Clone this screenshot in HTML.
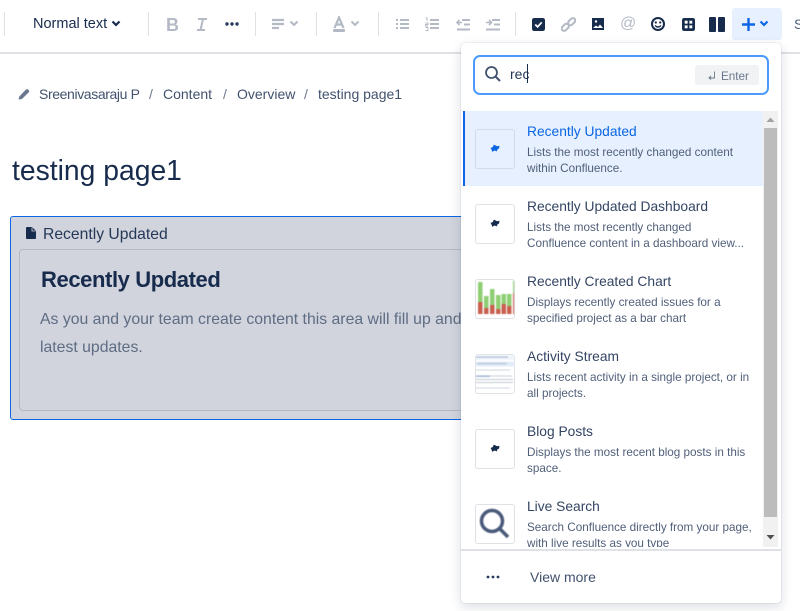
<!DOCTYPE html>
<html><head><meta charset="utf-8">
<style>
html,body{margin:0;padding:0;background:#fff}
#r{position:relative;width:800px;height:611px;overflow:hidden;background:#fff;font-family:"Liberation Sans",sans-serif;color:#172b4d}
#r div,#r span.a,#r svg{position:absolute}
.t{white-space:nowrap}
.sep{width:1px;height:24px;top:12px;background:#dfe1e6}
.ib{width:40px;height:40px;border:1px solid #dfe1e6;border-radius:3px;left:475px;background:#fff;box-sizing:content-box;overflow:hidden}
.ti{left:527px;margin-top:1px;font-size:13.800px;line-height:18px;color:#344563;white-space:nowrap}
.de{left:527px;margin-top:1px;font-size:11.700px;line-height:16px;color:#505f79;white-space:nowrap}
.bl{filter:blur(.4px)}
</style></head><body><div id="r">

<!-- toolbar -->
<div style="left:0;top:52px;width:800px;height:2px;background:#dfe1e6"></div>
<div class="sep" style="left:4px"></div>
<div class="t" style="left:33px;top:15px;font-size:14.500px;line-height:18px;color:#172b4d">Normal text</div>
<svg style="left:111px;top:20px" width="10" height="8" viewBox="0 0 10 8"><path d="M1.500 1.500l3.500 3.500 3.500-3.500" fill="none" stroke="#172b4d" stroke-width="2.200"/></svg>
<div class="sep" style="left:148px"></div>
<div class="t" style="left:166px;top:14px;font-size:18px;line-height:22px;font-weight:bold;color:#b3bac5">B</div>
<svg style="left:196px;top:17px" width="12" height="14" viewBox="0 0 12 14"><path d="M2 2h9M1 13h8M7 2L4.500 13" fill="none" stroke="#b3bac5" stroke-width="2"/></svg>
<svg style="left:225px;top:22px" width="14" height="4" viewBox="0 0 14 4"><circle cx="2" cy="2" r="1.700" fill="#253858"/><circle cx="7" cy="2" r="1.700" fill="#253858"/><circle cx="12" cy="2" r="1.700" fill="#253858"/></svg>
<div class="sep" style="left:255px"></div>
<svg style="left:271px;top:18px" width="14" height="12" viewBox="0 0 14 12"><path d="M1 2h12M1 6h12M1 10h7" stroke="#b3bac5" stroke-width="2.200"/></svg>
<svg style="left:289px;top:20px" width="10" height="8" viewBox="0 0 10 8"><path d="M1.500 1.500l3.500 3.500 3.500-3.500" fill="none" stroke="#b3bac5" stroke-width="2"/></svg>
<div class="sep" style="left:316px"></div>
<svg style="left:332px;top:16px" width="14" height="16" viewBox="0 0 14 16"><path d="M2.500 12L7 1.500 11.500 12M4 8.500h6" fill="none" stroke="#b3bac5" stroke-width="2.200"/><rect x="1" y="13" width="12" height="3" rx="1" fill="#b3bac5"/></svg>
<svg style="left:350px;top:20px" width="10" height="8" viewBox="0 0 10 8"><path d="M1.500 1.500l3.500 3.500 3.500-3.500" fill="none" stroke="#b3bac5" stroke-width="2"/></svg>
<div class="sep" style="left:378px"></div>
<svg style="left:395px;top:18px" width="14" height="12" viewBox="0 0 14 12"><path d="M1 2h2M1 6h2M1 10h2M5 2h9M5 6h9M5 10h9" stroke="#b3bac5" stroke-width="2"/></svg>
<svg style="left:425px;top:17px" width="14" height="14" viewBox="0 0 14 14"><path d="M5 3h9M5 7h9M5 11h9" stroke="#b3bac5" stroke-width="2"/><path d="M0.500 1h1.500v3M0.500 6h2.500v1.500h-2.500v1.500h2.500M0.500 10.500h2.500v3h-2.500" fill="none" stroke="#b3bac5" stroke-width="0.900"/></svg>
<svg style="left:456px;top:17px" width="14" height="14" viewBox="0 0 14 14"><path d="M6 3h8M8 7.500h6M1 12.500h13" stroke="#b3bac5" stroke-width="2"/><path d="M6 5.500H1M3.500 3l-2.500 2.500 2.500 2.500" fill="none" stroke="#b3bac5" stroke-width="1.600"/></svg>
<svg style="left:486px;top:17px" width="14" height="14" viewBox="0 0 14 14"><path d="M6 3h8M8 7.500h6M0 12.500h14" stroke="#b3bac5" stroke-width="2"/><path d="M0 5.500h5M3 3l2.500 2.500L3 8" fill="none" stroke="#b3bac5" stroke-width="1.600"/></svg>
<div class="sep" style="left:515px"></div>
<svg style="left:532px;top:18px" width="13" height="13" viewBox="0 0 12 12"><rect width="12" height="12" rx="2" fill="#172b4d"/><path d="M3 6l2.200 2.200L9 4" fill="none" stroke="#fff" stroke-width="1.600"/></svg>
<svg style="left:561px;top:17px" width="15" height="15" viewBox="0 0 14 14"><g fill="none" stroke="#b3bac5" stroke-width="1.900"><rect x="0.500" y="7.500" width="7.500" height="4.500" rx="2.200" transform="rotate(-45 4 10)"/><rect x="6" y="2" width="7.500" height="4.500" rx="2.200" transform="rotate(-45 10 4)"/></g></svg>
<svg style="left:592px;top:18px" width="12" height="12" viewBox="0 0 12 12"><rect width="12" height="12" fill="#172b4d"/><path d="M1 10l3-2.500 2 1.500 2-2.500 3 3.500z" fill="#fff"/><circle cx="4" cy="3.500" r="1.200" fill="#fff"/></svg>
<div class="t" style="left:620px;top:14px;font-size:16px;line-height:20px;color:#b3bac5">@</div>
<svg style="left:651px;top:17px" width="14" height="14" viewBox="0 0 14 14"><circle cx="7" cy="7" r="6" fill="none" stroke="#172b4d" stroke-width="2"/><circle cx="4.800" cy="5.500" r="1.100" fill="#172b4d"/><circle cx="9.200" cy="5.500" r="1.100" fill="#172b4d"/><path d="M4 8.500q3 3 6 0" fill="none" stroke="#172b4d" stroke-width="1.300"/></svg>
<svg style="left:682px;top:18px" width="13" height="13" viewBox="0 0 12 12"><rect width="12" height="12" rx="2" fill="#172b4d"/><rect x="2.500" y="2.500" width="2.700" height="2.700" fill="#fff"/><rect x="6.800" y="2.500" width="2.700" height="2.700" fill="#fff"/><rect x="2.500" y="6.800" width="2.700" height="2.700" fill="#fff"/><rect x="6.800" y="6.800" width="2.700" height="2.700" fill="#fff"/></svg>
<svg style="left:709px;top:17px" width="16" height="15" viewBox="0 0 16 15"><rect width="7" height="15" rx="1" fill="#172b4d"/><rect x="9" width="7" height="15" rx="1" fill="#172b4d"/></svg>
<div style="left:732px;top:8px;width:50px;height:32px;background:#e6f0fe;border-radius:3px"></div>
<svg style="left:741px;top:17px" width="15" height="15" viewBox="0 0 15 15"><path d="M7.500 1v13M1 7.500h13" stroke="#0c66e4" stroke-width="2.400"/></svg>
<svg style="left:759px;top:20px" width="10" height="8" viewBox="0 0 10 8"><path d="M1.500 1.500l3.500 3.500 3.500-3.500" fill="none" stroke="#0c66e4" stroke-width="2.200"/></svg>
<div class="t" style="left:794px;top:15px;font-size:14px;line-height:18px;color:#505f79">S</div>

<!-- breadcrumb -->
<svg style="left:18px;top:88px" width="12" height="12" viewBox="0 0 12 12"><path d="M0.500 11.500l0.800-3L8 1.500q1-.8 2 0l.8.800q.8 1 0 2L4 11z" fill="#6b778c"/></svg>
<div class="t" style="left:39px;top:85px;font-size:14px;line-height:18px;color:#42526e;letter-spacing:-.38px">Sreenivasaraju P</div>
<div class="t" style="left:149px;top:85px;font-size:14px;line-height:18px;color:#6b778c">/</div>
<div class="t" style="left:163px;top:85px;font-size:14px;line-height:18px;color:#42526e">Content</div>
<div class="t" style="left:223px;top:85px;font-size:14px;line-height:18px;color:#6b778c">/</div>
<div class="t" style="left:237px;top:85px;font-size:14px;line-height:18px;color:#42526e">Overview</div>
<div class="t" style="left:304px;top:85px;font-size:14px;line-height:18px;color:#6b778c">/</div>
<div class="t" style="left:318px;top:85px;font-size:14px;line-height:18px;color:#42526e">testing page1</div>

<div class="t" style="left:12px;top:152px;font-size:28.300px;line-height:36px;color:#172b4d">testing page1</div>

<!-- macro -->
<div style="left:10px;top:216px;width:470px;height:204px;box-sizing:border-box;background:#d1d4dc;border:1px solid #0c66e4;border-radius:3px"></div>
<svg style="left:26px;top:227px" width="10" height="12" viewBox="0 0 10 12"><path d="M0 1q0-1 1-1h5l4 4v7q0 1-1 1H1q-1 0-1-1z" fill="#172b4d"/><path d="M6 .5V4h3.500" fill="none" stroke="#d1d4dc" stroke-width="0.800"/></svg>
<div class="t" style="left:43px;top:225px;font-size:15.700px;line-height:20px;color:#253858">Recently Updated</div>
<div style="left:19px;top:249px;width:470px;height:162px;box-sizing:border-box;border:1px solid #b3b8c4;border-radius:4px"></div>
<div class="t" style="left:41px;top:265px;font-size:22px;line-height:30px;font-weight:bold;color:#172b4d;letter-spacing:-.4px">Recently Updated</div>
<div class="t" style="left:40px;top:306px;font-size:15.800px;line-height:28px;color:#5e6c84">As you and your team create content this area will fill up and</div>
<div class="t" style="left:40px;top:334px;font-size:15.800px;line-height:28px;color:#5e6c84">latest updates.</div>

<!-- popup -->
<div style="left:461px;top:43px;width:320px;height:560px;background:#fff;border-radius:4px;box-shadow:0 4px 12px rgba(9,30,66,.15),0 0 1px rgba(9,30,66,.31)"></div>
<div style="left:473px;top:55px;width:296px;height:40px;box-sizing:border-box;border:2px solid #4c9aff;border-radius:7px;background:#fff"></div>
<svg style="left:485px;top:66px" width="16" height="16" viewBox="0 0 16 16"><circle cx="6.500" cy="6.500" r="5.500" fill="none" stroke="#42526e" stroke-width="1.800"/><path d="M10.500 10.500l4.500 4.500" stroke="#42526e" stroke-width="2"/></svg>
<div class="t" style="left:510px;top:65px;font-size:14px;line-height:18px;color:#253858">rec</div>
<div style="left:527px;top:64px;width:1px;height:19px;background:#172b4d"></div>
<div style="left:695px;top:65px;width:64px;height:20px;background:#f1f2f4;border-radius:3px"></div>
<svg style="left:708px;top:71px" width="8" height="9" viewBox="0 0 8 9"><path d="M6.500 0.500v6.500h-5M3 5l-2 2 2 1.500" fill="none" stroke="#6b778c" stroke-width="0.900"/></svg>
<div class="t" style="left:721px;top:69px;font-size:11.700px;line-height:15px;color:#6b778c">Enter</div>

<!-- list -->
<div style="left:463px;top:111px;width:300px;height:75px;background:#e6f0fe"></div>
<div style="left:463px;top:111px;width:2px;height:75px;background:#0c66e4"></div>

<div class="ib" style="top:129px;width:38px;height:38px;background:#e6f0fe;border-color:#d5dbe6"></div>
<svg style="left:490px;top:144px" width="10" height="9" viewBox="0 0 9 8"><path d="M0.500 3.500l2-.8L3.500 0.500l2 1 1 .5 2-.5-.3 2.500-1.500.8-.5 1.800-2.200-.8-2 1.200-.5-1.800z" fill="#0c66e4"/></svg>
<div class="ti" style="top:122px;color:#0c66e4">Recently Updated</div>
<div class="de" style="top:144px">Lists the most recently changed content</div>
<div class="de" style="top:160px">within Confluence.</div>

<div class="ib" style="top:204px;width:38px;height:38px"></div>
<svg style="left:490px;top:219px" width="10" height="9" viewBox="0 0 9 8"><path d="M0.500 3.500l2-.8L3.500 0.500l2 1 1 .5 2-.5-.3 2.500-1.500.8-.5 1.800-2.200-.8-2 1.200-.5-1.800z" fill="#172b4d"/></svg>
<div class="ti" style="top:197px">Recently Updated Dashboard</div>
<div class="de" style="top:219px">Lists the most recently changed</div>
<div class="de" style="top:235px">Confluence content in a dashboard view...</div>

<div class="ib" style="top:279px;width:38px;height:38px"></div>
<svg class="bl" style="left:476px;top:280px" width="38" height="38" viewBox="0 0 38 38">
<g fill="#8fcf73"><rect x="2" y="2" width="4.500" height="32"/><rect x="8" y="16" width="4.500" height="18"/><rect x="14" y="9" width="4.500" height="25"/><rect x="20" y="15" width="4.500" height="19"/><rect x="25.500" y="14" width="4.500" height="20"/><rect x="31" y="14" width="4.500" height="20"/><rect x="37" y="1" width="1" height="33"/></g>
<g fill="#c9604f"><rect x="2" y="22" width="4.500" height="12"/><rect x="8" y="28" width="4.500" height="6"/><rect x="14" y="25" width="4.500" height="9"/><rect x="20" y="29" width="4.500" height="5"/><rect x="25.500" y="24" width="4.500" height="10"/><rect x="31" y="26" width="4.500" height="8"/><rect x="37" y="13" width="1" height="21"/></g>
</svg>
<div class="ti" style="top:272px">Recently Created Chart</div>
<div class="de" style="top:294px">Displays recently created issues for a</div>
<div class="de" style="top:310px">specified project as a bar chart</div>

<div class="ib" style="top:354px;width:38px;height:38px"></div>
<svg class="bl" style="left:476px;top:355px" width="38" height="38" viewBox="0 0 38 38">
<rect x="0" y="0" width="38" height="5" fill="#f0f5fb"/><rect x="0" y="1.500" width="32" height="1.300" fill="#b0c0d8"/><rect x="0" y="6.500" width="38" height="5" fill="#e3edf8"/><rect x="1" y="8" width="30" height="1.300" fill="#b4c3d8"/><rect x="0" y="14.500" width="34" height="1" fill="#ccd3dd"/><rect x="0" y="20.500" width="14" height="1.300" fill="#8ea8cc"/><rect x="14" y="20.500" width="22" height="1" fill="#c8ced8"/><rect x="0" y="24" width="37" height="1" fill="#c2c8d2"/><rect x="0" y="27" width="37" height="1" fill="#c2c8d2"/><rect x="0" y="32.500" width="34" height="1" fill="#ccd3dd"/>
</svg>
<div class="ti" style="top:347px">Activity Stream</div>
<div class="de" style="top:369px">Lists recent activity in a single project, or in</div>
<div class="de" style="top:385px">all projects.</div>

<div class="ib" style="top:429px;width:38px;height:38px"></div>
<svg style="left:490px;top:444px" width="10" height="9" viewBox="0 0 9 8"><path d="M0.500 3.500l2-.8L3.500 0.500l2 1 1 .5 2-.5-.3 2.500-1.500.8-.5 1.800-2.200-.8-2 1.200-.5-1.800z" fill="#172b4d"/></svg>
<div class="ti" style="top:422px">Blog Posts</div>
<div class="de" style="top:444px">Displays the most recent blog posts in this</div>
<div class="de" style="top:460px">space.</div>

<div class="ib" style="top:504px;width:38px;height:38px"></div>
<svg class="bl" style="left:479px;top:508px" width="32" height="32" viewBox="0 0 32 32"><circle cx="13" cy="13" r="10.500" fill="none" stroke="#4a5a7a" stroke-width="3.500"/><path d="M21 21l8 8" stroke="#4a5a7a" stroke-width="3.500"/></svg>
<div class="ti" style="top:497px">Live Search</div>
<div class="de" style="top:519px">Search Confluence directly from your page,</div>
<div style="left:527px;top:535px;width:230px;height:12px;overflow:hidden"><div class="de" style="left:0;top:0">with live results as you type</div></div>

<!-- scrollbar -->
<div style="left:763px;top:111px;width:15px;height:436px;background:#f1f1f1"></div>
<div style="left:764px;top:128px;width:13px;height:389px;background:#bcbcbc"></div>
<svg style="left:766px;top:117px" width="9" height="5" viewBox="0 0 9 5"><path d="M0.500 5L4.500 0.500 8.500 5z" fill="#a3a3a3"/></svg>
<svg style="left:766px;top:535px" width="9" height="5" viewBox="0 0 9 5"><path d="M0.500 0L4.500 4.500 8.500 0z" fill="#505050"/></svg>

<!-- footer -->
<div style="left:461px;top:549px;width:320px;height:2px;background:#dfe1e6"></div>
<svg style="left:486px;top:575px" width="14" height="4" viewBox="0 0 14 4"><circle cx="2" cy="2" r="1.400" fill="#253858"/><circle cx="7" cy="2" r="1.400" fill="#253858"/><circle cx="12" cy="2" r="1.400" fill="#253858"/></svg>
<div class="t" style="left:530px;top:568px;font-size:14px;line-height:18px;color:#42526e">View more</div>

</div></body></html>
